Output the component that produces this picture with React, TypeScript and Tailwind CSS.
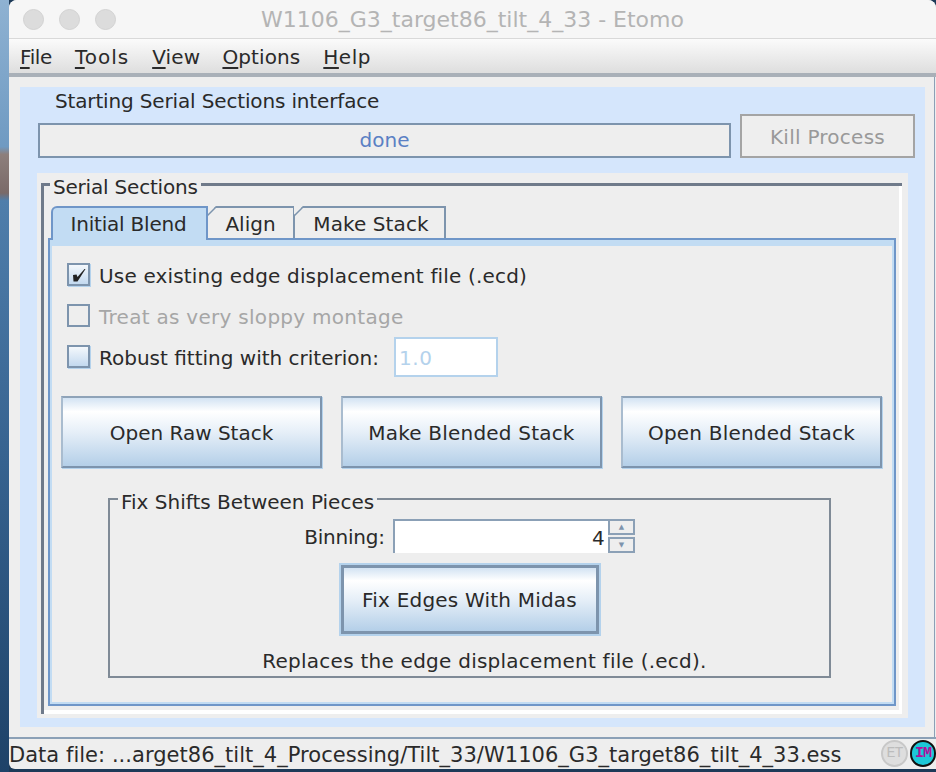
import React from "react";

const F = "[font-family:'DejaVu_Sans',sans-serif]";
const GRAD = "bg-[linear-gradient(to_bottom,#d3e3f3_0%,#ffffff_20%,#e6eff8_50%,#b4cfe8_100%)]";

function Cb({ checked, disabled }: { checked?: boolean; disabled?: boolean }) {
  return (
    <div
      className={
        "w-[23px] h-[23px] shrink-0 border-2 border-[#7d94ad] " +
        (disabled
          ? "bg-[#eeeeee]"
          : "bg-gradient-to-b from-[#f4f8fc] to-[#c3d9ef] shadow-[1px_1px_0_#b4d2ec]")
      }
    >
      {checked && (
        <svg width="19" height="19" viewBox="0 0 19 19">
          <path d="M4 10 L7.5 9.5 L8.5 12 L15.5 4 L16.5 4 L8.5 16.5 L4.5 16.5 Z" fill="#222" />
        </svg>
      )}
    </div>
  );
}

function BigBtn({ label, cls }: { label: string; cls?: string }) {
  return (
    <div
      className={
        "w-[261px] h-[72px] shrink-0 flex items-center justify-center pt-[2px] border-2 border-[#7d94ad] border-t-[#8fa3b8] border-l-[#a9bccf] shadow-[1px_1px_0_#b4d2ec] text-[#2a2a2a] " +
        GRAD +
        " " +
        (cls ?? "")
      }
    >
      {label}
    </div>
  );
}

function Tab({ label, w, active, cls }: { label: string; w: string; active?: boolean; cls?: string }) {
  return (
    <div
      className={
        w +
        " relative flex items-center justify-center shrink-0 text-[#2a2a2a] border-t-2 border-r-2 " +
        (active
          ? "h-[34px] -mb-[2px] z-10 bg-[#c2dcf3] border-[#6f96c8] border-l-2 rounded-tl-[6px] "
          : "h-[32px] pt-[2px] bg-[#eeeeee] border-[#7d94ad] ") +
        (cls ?? "")
      }
    >
      {label}
      {!active && (
        <svg className="absolute -left-px -top-[2px]" width="10" height="10" viewBox="0 0 10 10">
          <path d="M0 0 H9 L0 9 Z" fill="#eeeeee" />
          <path d="M0.5 9.5 L9 1" stroke="#7d94ad" strokeWidth="1.5" fill="none" />
        </svg>
      )}
    </div>
  );
}

const UL = "underline decoration-2 underline-offset-[3px]";

export default function App() {
  return (
    <div className={"w-[936px] h-[772px] flex overflow-hidden text-[20px] leading-none text-[#2a2a2a] bg-[#1d3a58] " + F}>
      <div className="w-[9px] h-full shrink-0 bg-[linear-gradient(to_bottom,#8fb2d2_0%,#6f9ac2_19%,#8d7f7c_20%,#7a6a68_25%,#4f7eab_26%,#36628f_60%,#1e4268_100%)]" />
      <div className="flex-1 h-[769px] flex flex-col min-w-0 bg-[#eeeeee] rounded-tl-[8px] rounded-tr-[8px] rounded-bl-[6px] overflow-hidden">
        <div className="h-[39px] shrink-0 bg-[#f6f6f6] border-b border-[#d9d9d9] flex items-center relative">
          <div className="flex gap-[15px] pl-[14px] absolute left-0 top-[9px]">
            <div className="w-[21px] h-[21px] rounded-full bg-[#dcdcdc] border border-[#d2d2d2]" />
            <div className="w-[21px] h-[21px] rounded-full bg-[#dcdcdc] border border-[#d2d2d2]" />
            <div className="w-[21px] h-[21px] rounded-full bg-[#dcdcdc] border border-[#d2d2d2]" />
          </div>
          <div className="w-full pt-[2px] text-center text-[#b4b4b4] text-[22px]">W1106_G3_target86_tilt_4_33 - Etomo</div>
        </div>
        <div className="h-[38px] shrink-0 bg-gradient-to-b from-[#fbfbfb] to-[#dedede] flex items-center pl-[11px] pt-[1px] gap-[23px] border-b-[4px] border-[#a9b0b8]">
          <span className="tracking-[-0.4px]"><u className={UL}>F</u>ile</span>
          <span className="tracking-[1px]"><u className={UL}>T</u>ools</span>
          <span className="tracking-[0.2px]"><u className={UL}>V</u>iew</span>
          <span className="-ml-[1px] tracking-[0.1px]"><u className={UL}>O</u>ptions</span>
          <span className="tracking-[0.5px]"><u className={UL}>H</u>elp</span>
        </div>
        <div className="h-[660px] shrink-0 mr-[1px] pt-[10px] border-r border-[#8ba0b6]">
          <div className="h-[640px] ml-[11px] mr-[9px] bg-[#d5e6fc] flex flex-col">
            <div className="pl-[35px] pt-[4px] h-[27px] shrink-0 tracking-[-0.15px]">Starting Serial Sections interface</div>
            <div className="flex items-end pl-[18px] h-[44px] shrink-0">
              <div className="w-[693px] h-[35px] shrink-0 pb-[1px] bg-[#eeeeee] border-2 border-[#7d94ad] flex items-center justify-center text-[#5a80c4]">done</div>
              <div className="ml-[9px] w-[175px] h-[44px] shrink-0 pt-[2px] bg-[#eeeeee] border-2 border-[#a4a4a4] flex items-center justify-center text-[#999999] tracking-[0.25px]">Kill Process</div>
            </div>
            <div className="ml-[17px] mr-[17px] mt-[15px] h-[545px] shrink-0 bg-[#eeeeee] pt-[10px] pl-[4px] pr-[6px] pb-[4px] flex flex-col">
              <div className="flex-1 min-h-0 border-l-[3px] border-t-[3px] border-[#6f7a8a] flex flex-col relative">
                <div className="absolute left-[6px] -top-[8px] bg-[#eeeeee] px-[3px] h-[18px] flex items-center tracking-[-0.2px]">Serial Sections</div>
                <div className="flex-1 min-h-0 border-r-[3px] border-b-[4px] border-white flex flex-col pl-[4px] pr-[3px] pb-[4px]">
                  <div className="flex pl-[3px] items-end h-[52px] shrink-0 relative z-10">
                    <Tab label="Initial Blend" w="w-[157px]" active cls="tracking-[-0.2px] pr-[2px]" />
                    <Tab label="Align" w="w-[87px]" />
                    <Tab label="Make Stack" w="w-[151px]" cls="tracking-[0.1px] pl-[3px]" />
                  </div>
                  <div className="flex-1 min-h-0 border-2 border-[#6f96c8] flex flex-col">
                    <div className="flex-1 min-h-0 border-x-2 border-b-2 border-t-[6px] border-[#c2dcf3] pt-[8px] pl-[9px] pr-[10px] flex flex-col">
                      <div className="flex items-center h-[41px] shrink-0 gap-[9px] pl-[6px] tracking-[0.17px]">
                        <Cb checked />
                        <span className="pt-[2px]">Use existing edge displacement file (.ecd)</span>
                      </div>
                      <div className="flex items-center h-[41px] shrink-0 gap-[9px] pl-[6px] text-[#a6a6a6] tracking-[0.28px]">
                        <Cb disabled />
                        <span className="pt-[2px]">Treat as very sloppy montage</span>
                      </div>
                      <div className="flex items-center h-[41px] shrink-0 gap-[9px] pl-[6px]">
                        <Cb />
                        <span className="pt-[2px]">Robust fitting with criterion:</span>
                        <div className="ml-[6px] w-[104px] h-[40px] pt-[2px] bg-white border-2 border-[#b4d2ec] flex items-center pl-[3px] text-[#b4d2ec] tracking-[0.6px]">1.0</div>
                      </div>
                      <div className="flex gap-[19px] mt-[19px] shrink-0">
                        <BigBtn label="Open Raw Stack" />
                        <BigBtn label="Make Blended Stack" cls="tracking-[0.2px]" />
                        <BigBtn label="Open Blended Stack" cls="tracking-[0.2px]" />
                      </div>
                      <div className="mt-[30px] ml-[47px] w-[723px] h-[180px] shrink-0 border-2 border-[#7f8a96] relative flex flex-col items-center">
                        <div className="absolute left-[8px] -top-[9px] bg-[#eeeeee] px-[3px] h-[22px] flex items-center">Fix Shifts Between Pieces</div>
                        <div className="flex items-center mt-[19px] h-[34px] shrink-0">
                          <span className="mr-[8px] pt-[2px] tracking-[-0.2px]">Binning:</span>
                          <div className="w-[215px] h-[34px] pt-[2px] bg-white border-l-2 border-t-2 border-[#8ba0b6] flex items-center justify-end pr-[3px]">4</div>
                          <div className="flex flex-col w-[27px] h-[34px]">
                            <div className="h-[16px] border-2 border-[#8ba0b6] flex items-center justify-center text-[7px] text-[#7d94ad]">▲</div>
                            <div className="mt-[2px] h-[16px] border-2 border-[#8ba0b6] flex items-center justify-center text-[7px] text-[#7d94ad]">▼</div>
                          </div>
                        </div>
                        <div className={"mt-[12px] w-[258px] h-[69px] shrink-0 border-[3px] border-[#7d94ad] outline-2 outline-[#b4d2ec] flex items-center justify-center tracking-[0.2px] " + GRAD}>Fix Edges With Midas</div>
                        <div className="mt-[17px] ml-[30px] tracking-[0.25px]">Replaces the edge displacement file (.ecd).</div>
                      </div>
                    </div>
                  </div>
                </div>
              </div>
            </div>
          </div>
        </div>
        <div className="flex-1 min-h-0 pt-[2px] border-t-2 border-[#8ba0b6] flex items-center relative text-[21px] tracking-[0.03px]">
          <span className="whitespace-nowrap">Data file: ...arget86_tilt_4_Processing/Tilt_33/W1106_G3_target86_tilt_4_33.ess</span>
          <div className="absolute left-[872px] top-[1px] flex gap-[2px]">
            <div className="w-[27px] h-[27px] shrink-0 rounded-full bg-[#dedede] border-2 border-[#c8c8c8] flex items-center justify-center text-[15px] tracking-[-1px] text-[#bcbcbc] [font-family:'Liberation_Mono',monospace]">ET</div>
            <div className="w-[26px] h-[27px] shrink-0 rounded-full bg-[#1cc8d8] border-2 border-[#111] flex items-center justify-center text-[15px] font-bold tracking-[-1px] text-[#b0109c] [font-family:'Liberation_Mono',monospace]">IM</div>
          </div>
        </div>
      </div>
    </div>
  );
}
